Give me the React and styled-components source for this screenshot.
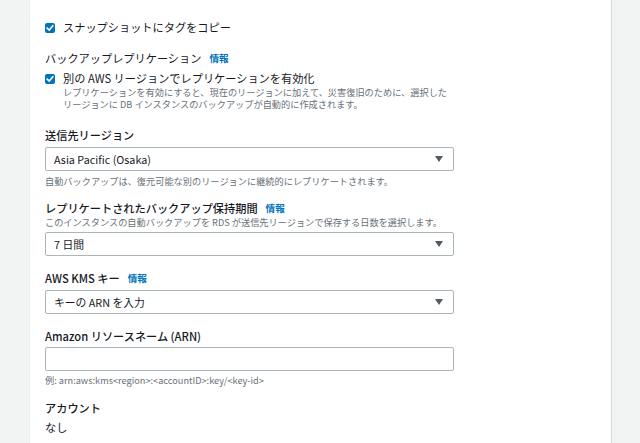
import React from "react";
import styled, { createGlobalStyle } from "styled-components";

const Global = createGlobalStyle`
  html, body { margin: 0; padding: 0; background: #f2f3f3; }
  body { font-family: "Noto Sans CJK JP", "Noto Sans", sans-serif; color: #16191f; }
  * { box-sizing: border-box; }
`;

const Page = styled.div`
  display: flex;
  height: 443px;
  overflow: hidden;
  background: #f2f3f3;
`;

const Gutter = styled.div`
  width: ${(p) => p.$w}px;
  flex: none;
`;

const Panel = styled.div`
  width: 583px;
  flex: none;
  background: #fff;
  border-left: 1px solid #eaeded;
  border-right: 1px solid #d5dbdb;
  padding: 19px 0 0 15px;
  display: flex;
  flex-direction: column;
`;

const CheckRow = styled.div`
  display: flex;
  align-items: flex-start;
  margin-top: ${(p) => p.$mt || 0}px;
`;

const Box = styled.span`
  width: 10px;
  height: 10px;
  flex: none;
  margin-top: 4px;
  margin-right: 8px;
  border-radius: 2px;
  background: #0073bb;
  display: flex;
  align-items: center;
  justify-content: center;
`;

const CheckText = styled.div`
  display: flex;
  flex-direction: column;
`;

const Label = styled.div`
  font-size: 11.2px;
  line-height: 16px;
  height: 16px;
  font-weight: ${(p) => p.$w || 400};
  color: #16191f;
  white-space: nowrap;
  margin-top: ${(p) => p.$mt || 0}px;
  display: flex;
  align-items: center;
  flex: none;
`;

const Info = styled.span`
  color: #0073bb;
  font-weight: 700;
  font-size: 9.6px;
  line-height: 16px;
  margin-left: 8px;
`;

const Desc = styled.div`
  font-size: 9.2px;
  line-height: 12px;
  height: 12px;
  color: #687078;
  white-space: nowrap;
  margin-top: ${(p) => p.$mt || 0}px;
  flex: none;
`;

const Field = styled.div`
  display: flex;
  flex-direction: column;
  margin-top: ${(p) => p.$mt || 0}px;
`;

const SelectBox = styled.div`
  width: 409px;
  height: 24px;
  flex: none;
  margin-top: ${(p) => p.$mt || 4}px;
  border: 1px solid #aab7b8;
  border-radius: 2px;
  background: #fff;
  display: flex;
  align-items: center;
  justify-content: space-between;
  padding: 0 10px 0 8px;
  font-size: 10.8px;
  color: #16191f;
`;

const Caret = styled.span`
  width: 0;
  height: 0;
  border-left: 4px solid transparent;
  border-right: 4px solid transparent;
  border-top: 6px solid #545b64;
`;

const Check = () => (
  <Box>
    <svg width="8" height="8" viewBox="0 0 8 8">
      <path d="M1.2 4.2 L3.2 6 L6.8 1.8" fill="none" stroke="#fff" strokeWidth="1.6" strokeLinecap="square" />
    </svg>
  </Box>
);

const Select = ({ value, mt }) => (
  <SelectBox $mt={mt}>
    <span>{value}</span>
    <Caret />
  </SelectBox>
);

export default function App() {
  return (
    <Page>
      <Global />
      <Gutter $w={29} />
      <Panel>
        <CheckRow>
          <Check />
          <Label>スナップショットにタグをコピー</Label>
        </CheckRow>

        <Label $mt={15}>
          バックアップレプリケーション<Info>情報</Info>
        </Label>

        <CheckRow $mt={4}>
          <Check />
          <CheckText>
            <Label>別の AWS リージョンでレプリケーションを有効化</Label>
            <Desc>レプリケーションを有効にすると、現在のリージョンに加えて、災害復旧のために、選択した</Desc>
            <Desc>リージョンに DB インスタンスのバックアップが自動的に作成されます。</Desc>
          </CheckText>
        </CheckRow>

        <Field $mt={17}>
          <Label $w={500}>送信先リージョン</Label>
          <Select value="Asia Pacific (Osaka)" />
          <Desc $mt={4}>自動バックアップは、復元可能な別のリージョンに継続的にレプリケートされます。</Desc>
        </Field>

        <Field $mt={13}>
          <Label $w={500}>
            レプリケートされたバックアップ保持期間<Info>情報</Info>
          </Label>
          <Desc>このインスタンスの自動バックアップを RDS が送信先リージョンで保存する日数を選択します。</Desc>
          <Select value="7 日間" />
        </Field>

        <Field $mt={14}>
          <Label $w={500}>
            AWS KMS キー<Info>情報</Info>
          </Label>
          <Select value="キーの ARN を入力" />
        </Field>

        <Field $mt={14}>
          <Label $w={500}>Amazon リソースネーム (ARN)</Label>
          <SelectBox $mt={3} />
          <Desc $mt={3}>例: arn:aws:kms&lt;region&gt;:&lt;accountID&gt;:key/&lt;key-id&gt;</Desc>
        </Field>

        <Field $mt={14}>
          <Label $w={500}>アカウント</Label>
          <Label $mt={3}>なし</Label>
        </Field>
      </Panel>
      <Gutter $w={28} />
    </Page>
  );
}
